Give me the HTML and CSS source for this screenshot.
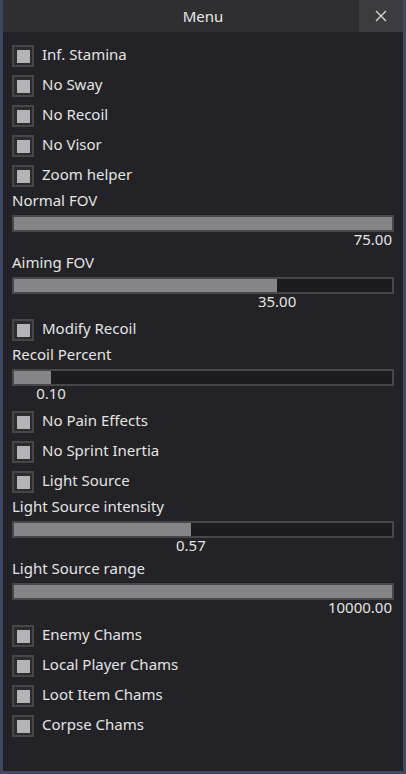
FILE: index.html
```html
<!DOCTYPE html>
<html>
<head>
<meta charset="utf-8">
<link rel="stylesheet" href="styles.css">
</head>
<body>
<div class="window">
  <div class="titlebar">
    <div class="title">Menu</div>
    <div class="close">
      <svg width="12" height="12" viewBox="0 0 12 12"><path d="M1 1 L11 11 M11 1 L1 11" stroke="#d8d8d8" stroke-width="1.3" fill="none"/></svg>
    </div>
  </div>
  <div class="content">
    <div class="check"><span class="box"><span class="mark"></span></span><span class="label">Inf. Stamina</span></div>
    <div class="check"><span class="box"><span class="mark"></span></span><span class="label">No Sway</span></div>
    <div class="check"><span class="box"><span class="mark"></span></span><span class="label">No Recoil</span></div>
    <div class="check"><span class="box"><span class="mark"></span></span><span class="label">No Visor</span></div>
    <div class="check"><span class="box"><span class="mark"></span></span><span class="label">Zoom helper</span></div>

    <div class="slider">
      <div class="slabel">Normal FOV</div>
      <div class="track"><div class="fill" style="width:100%"></div></div>
      <div class="value end"><span>75.00</span></div>
    </div>
    <div class="slider">
      <div class="slabel">Aiming FOV</div>
      <div class="track"><div class="fill" style="width:69.6%"></div></div>
      <div class="value"><span class="anchor" style="width:69.6%"></span><span class="pin"><span>35.00</span></span></div>
    </div>

    <div class="check"><span class="box"><span class="mark"></span></span><span class="label">Modify Recoil</span></div>

    <div class="slider">
      <div class="slabel">Recoil Percent</div>
      <div class="track"><div class="fill" style="width:9.8%"></div></div>
      <div class="value"><span class="anchor" style="width:9.8%"></span><span class="pin"><span>0.10</span></span></div>
    </div>

    <div class="check"><span class="box"><span class="mark"></span></span><span class="label">No Pain Effects</span></div>
    <div class="check"><span class="box"><span class="mark"></span></span><span class="label">No Sprint Inertia</span></div>
    <div class="check"><span class="box"><span class="mark"></span></span><span class="label">Light Source</span></div>

    <div class="slider">
      <div class="slabel">Light Source intensity</div>
      <div class="track"><div class="fill" style="width:46.8%"></div></div>
      <div class="value"><span class="anchor" style="width:46.8%"></span><span class="pin"><span>0.57</span></span></div>
    </div>
    <div class="slider">
      <div class="slabel">Light Source range</div>
      <div class="track"><div class="fill" style="width:100%"></div></div>
      <div class="value end"><span>10000.00</span></div>
    </div>

    <div class="check"><span class="box"><span class="mark"></span></span><span class="label">Enemy Chams</span></div>
    <div class="check"><span class="box"><span class="mark"></span></span><span class="label">Local Player Chams</span></div>
    <div class="check"><span class="box"><span class="mark"></span></span><span class="label">Loot Item Chams</span></div>
    <div class="check"><span class="box"><span class="mark"></span></span><span class="label">Corpse Chams</span></div>
  </div>
</div>
</body>
</html>
```
FILE: styles.css
```css
html, body {
  margin: 0;
  padding: 0;
}
body {
  background: #3d4862;
  width: 406px;
  height: 774px;
  overflow: hidden;
  font-family: "Noto Sans", "Open Sans", sans-serif;
  font-size: 15px;
  color: #e4e4e4;
}
.window {
  margin: 0 3px;
  height: 771px;
  background: #232226;
  display: flex;
  flex-direction: column;
}
.titlebar {
  height: 32px;
  background: #2f2f31;
  display: flex;
  align-items: stretch;
  flex-shrink: 0;
}
.title {
  flex: 1;
  display: flex;
  align-items: center;
  justify-content: center;
  padding-left: 44px;
  font-size: 15px;
  color: #e8e8e8;
}
.close {
  width: 44px;
  background: #3c3c3e;
  display: flex;
  align-items: center;
  justify-content: center;
}
.content {
  padding: 9px 9px 0 9px;
  display: flex;
  flex-direction: column;
}
.check {
  height: 30px;
  display: flex;
  align-items: center;
  gap: 8px;
}
.box {
  width: 22px;
  height: 22px;
  box-sizing: border-box;
  border: 2px solid #47474a;
  background: #2c2c2f;
  display: flex;
  align-items: center;
  justify-content: center;
}
.mark {
  width: 13px;
  height: 13px;
  background: #b4b4b6;
}
.label {
  line-height: 20px;
  padding-bottom: 5px;
}
.slider {
  display: flex;
  flex-direction: column;
  margin-bottom: 7px;
}
.slabel {
  line-height: 18px;
  margin-bottom: 6px;
}
.track {
  height: 17px;
  box-sizing: border-box;
  border: 2px solid #48484b;
  background: #1c1b1f;
}
.fill {
  height: 100%;
  background: #858489;
}
.value {
  display: flex;
  line-height: 14px;
  height: 14px;
  padding: 0 2px;
}
.value.end {
  justify-content: flex-end;
}
.anchor {
  flex-shrink: 0;
}
.pin {
  width: 0;
  display: flex;
  justify-content: center;
  white-space: nowrap;
}
```
